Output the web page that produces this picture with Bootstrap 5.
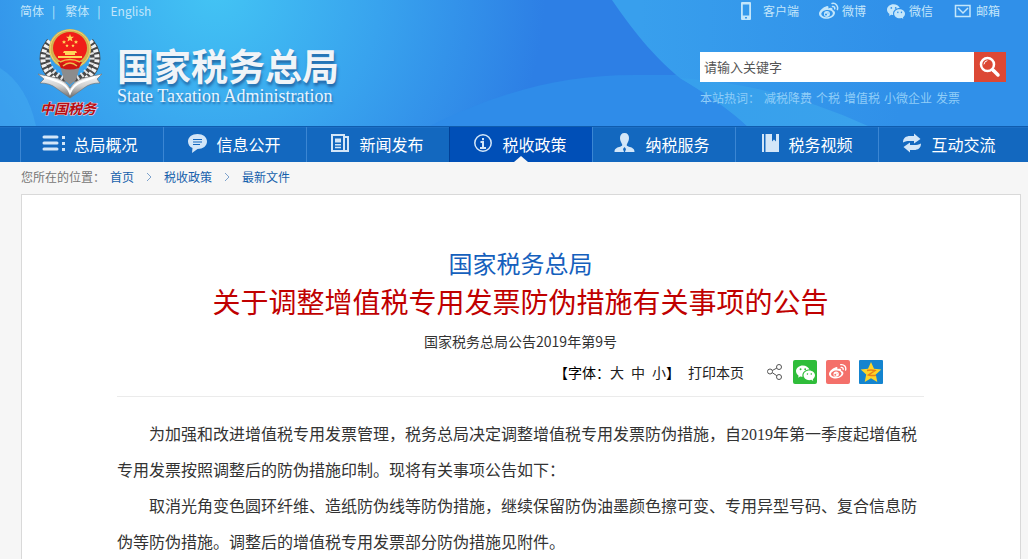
<!DOCTYPE html>
<html lang="zh-CN">
<head>
<meta charset="utf-8">
<meta name="viewport" content="width=device-width, initial-scale=1">
<title>国家税务总局</title>
<link href="https://cdn.jsdelivr.net/npm/bootstrap@5.3.0/dist/css/bootstrap.min.css" rel="stylesheet">
<style>
  body { background: #f6f6f6; color: #333; font: 12px/20px "Noto Sans CJK SC", sans-serif; }
  a { text-decoration: none; }
  .page-wrap { padding-left: 20px; padding-right: 7px; }
  .site-header { background: #2f8ce9; }
  .header-art { z-index: 0; }
  .site-header .page-wrap { z-index: 1; }
  .topbar { height: 22px; }
  .topbar, .topbar a { color: #c3e6fb; }
  .lang-links span { margin: 0 10px 0 8px; }
  .service-links { gap: 20px; padding-right: 21px; }
  .service-links a { display: flex; align-items: center; gap: 3px; }
  .service-links svg { width: 20px; height: 18px; }
  .service-links .app-link { gap: 7px; }
  .masthead { height: 104px; padding: 6px 15px 0 16px; }
  .emblem { width: 68px; height: 91px; }
  .brand-words { margin-left: 13px; padding-top: 16px; }
  .brand-cn { font-size: 37px; line-height: 42px; font-weight: 700; color: #f0f4f8; text-shadow: 1px 3px 3px rgba(20, 60, 120, .6); }
  .brand-en { font: 18px/20px "Liberation Serif", serif; color: #e8f4fd; text-shadow: 1px 2px 2px rgba(20, 60, 120, .5); }
  .search-area { width: 306px; padding-top: 24px; }
  .search-area .form-control { height: 30px; padding: 0 4px 2px; font-size: 13px; line-height: 28px; border: 0; color: #555; }
  .search-area .form-control::placeholder { color: #555; opacity: 1; line-height: 28px; }
  .search-btn { width: 32px; height: 30px; padding: 0; background: #dc4835; }
  .hot-words { margin-top: 6px; gap: 4px; color: #8fcdf8; }
  .hot-words a { color: #8fcdf8; }
  .main-menu { background: #1368bf; border-top: 1px solid #0f5cae; box-shadow: inset 0 1px #1c6fc5; }
  .main-menu li { flex: 1 1 0; border-left: 1px solid #3b86d3; }
  .main-menu a { height: 35px; gap: 7px; padding-right: 4px; padding-bottom: 1px; font-size: 16px; color: #fff; }
  .main-menu svg { width: 24px; height: 22px; color: #d3e6f8; }
  .main-menu .current { background: #004fb7; border-left-color: #004098; }
  .current a::after { content: ""; position: absolute; bottom: 0; left: 50%; margin-left: -7px; border: 7px solid transparent; border-top: 0; border-bottom: 6px solid #f6f6f6; }
  .crumbs { height: 32px; padding: 0 0 2px 1px; color: #777; }
  .crumbs span { margin-right: 5px; }
  .crumbs a { color: #1560ac; }
  .crumbs svg { width: 6px; height: 10px; margin: 0 12px; }
  .article-box { background: #fff; border: 1px solid #d9d9d9; border-bottom: 0; margin-left: 1px; padding: 49px 96px 0 95px; }
  .article-org { font-size: 24px; line-height: 38px; color: #1560bd; }
  .article-title { font-size: 28px; line-height: 38px; color: #c00000; }
  .article-no { font-size: 14px; line-height: 42px; }
  .tools { font-size: 14px; height: 20px; margin-right: 41px; color: #000; }
  .tools button { font-size: 14px; line-height: 20px; color: #222; }
  .size-set button { margin-right: 7px; }
  .size-set button:last-of-type { margin-right: 0; }
  .share-set { gap: 9px; margin-left: 22px; }
  .share-set svg { display: block; width: 24px; height: 24px; }
  .share-set .share-any svg { width: 18px; height: 18px; }
  .article-body { margin-top: 14px; padding-top: 20px; border-top: 1px solid #ebebeb; font: 16px/36px "Liberation Serif", "Noto Sans CJK SC", serif; color: #333; }
  .article-body p { text-indent: 2em; }
</style>
</head>
<body>

<svg class="d-none">
  <symbol id="wechat" viewBox="0 0 16 16"><g fill="currentColor"><path d="M11.176 14.429c-2.665 0-4.826-1.8-4.826-4.018 0-2.22 2.159-4.02 4.824-4.02S16 8.191 16 10.411c0 1.21-.65 2.301-1.666 3.036a.32.32 0 0 0-.12.366l.218.81a.6.6 0 0 1 .029.117.166.166 0 0 1-.162.162.2.2 0 0 1-.092-.03l-1.057-.61a.5.5 0 0 0-.256-.074.5.5 0 0 0-.142.021 5.7 5.7 0 0 1-1.576.22M9.064 9.542a.647.647 0 1 0 .557-1 .645.645 0 0 0-.646.647.6.6 0 0 0 .09.353Zm3.232.001a.646.646 0 1 0 .546-1 .645.645 0 0 0-.644.644.63.63 0 0 0 .098.356"/><path d="M0 6.826c0 1.455.781 2.765 2.001 3.656a.385.385 0 0 1 .143.439l-.161.6-.1.373a.5.5 0 0 0-.032.14.19.19 0 0 0 .193.193q.06 0 .111-.029l1.268-.733a.6.6 0 0 1 .308-.088q.088 0 .171.025a6.8 6.8 0 0 0 1.625.26 4.5 4.5 0 0 1-.177-1.251c0-2.936 2.785-5.02 5.824-5.02l.15.002C10.587 3.429 8.392 2 5.796 2 2.596 2 0 4.16 0 6.826m4.632-1.555a.77.77 0 1 1-1.54 0 .77.77 0 0 1 1.54 0m3.875 0a.77.77 0 1 1-1.54 0 .77.77 0 0 1 1.54 0"/></g></symbol>
  <symbol id="weibo" viewBox="0 0 20 18">
    <path fill="currentColor" fill-rule="evenodd" d="M7.5 4.2c1.6-.5 2.4.4 1.8 2.2 2.6-1 4.7-.7 4.2 1.7 1.700.6 2.600 1.500 2.500 2.800-.2 3-4 5.800-8.300 5.800C3.400 16.700 0 14.600 0 11.700 0 8.700 4.300 5 7.500 4.200ZM8.300 7.900c-3.400.1-6.100 2-6 4.200.1 2 2.800 3.300 6 3.100 3.200-.2 5.700-2.100 5.500-4.200-.2-2-2.600-3.200-5.500-3.100Z"/>
    <path fill="currentColor" fill-rule="evenodd" d="M7.900 8.900a3 3 0 1 0 .1 6 3 3 0 0 0-.1-6ZM7 11.400a1.100 1.100 0 1 1 0 2.200 1.100 1.100 0 0 1 0-2.200Zm2-.9a.5.500 0 1 1 0 1 .5.500 0 0 1 0-1Z"/>
    <path fill="none" stroke="currentColor" stroke-width="1.500" stroke-linecap="round" d="M13 1.400c3.800-.7 6.500 2.700 5.400 6.100M13.500 4.500c1.500-.3 2.600 1 2.200 2.300"/>
  </symbol>
</svg>

<header class="site-header position-relative">
  <svg class="header-art position-absolute top-0 start-0 w-100 h-100" viewBox="0 0 1028 126" preserveAspectRatio="none" aria-hidden="true">
    <defs>
      <radialGradient id="glow" gradientUnits="userSpaceOnUse" cx="215" cy="-10" r="330">
        <stop offset="0" stop-color="#43c4f4"/><stop offset=".5" stop-color="#38a3ee"/><stop offset="1" stop-color="#2d7fe5"/>
      </radialGradient>
      <linearGradient id="sweep" gradientUnits="userSpaceOnUse" x1="640" y1="0" x2="900" y2="0">
        <stop offset="0" stop-color="#389fed"/><stop offset="1" stop-color="#3090e9"/>
      </linearGradient>
      <linearGradient id="cross" gradientUnits="userSpaceOnUse" x1="690" y1="0" x2="860" y2="0">
        <stop offset="0" stop-color="#37a0ec"/><stop offset="1" stop-color="#3aa2ec"/>
      </linearGradient>
    </defs>
    <rect width="1028" height="126" fill="url(#glow)"/>
    <path d="M0 68Q27 85 36 126H0Z" fill="#49b4f3" opacity=".4"/>
    <path d="M430 126C500 92 560 75 635 75H700L760 126Z" fill="#2f8ce9"/>
    <path d="M612 0C637 37 660 62 680 78Q725 105 747 126H1028V0Z" fill="url(#sweep)"/>
    <path d="M680 78Q780 85 868 126H747Q725 105 680 78Z" fill="url(#cross)"/>
  </svg>

  <div class="container-fluid page-wrap position-relative">
    <div class="topbar d-flex justify-content-between align-items-center">
      <div class="lang-links"><a href="#">简体</a><span>|</span><a href="#">繁体</a><span>|</span><a href="#">English</a></div>
      <div class="service-links d-flex">
        <a class="app-link" href="#"><svg viewBox="0 0 20 18"><path fill="currentColor" fill-rule="evenodd" d="M6 0h8a1 1 0 0 1 1 1v16a1 1 0 0 1-1 1H6a1 1 0 0 1-1-1V1a1 1 0 0 1 1-1Zm.8 2.500v11h6.400v-11ZM9 15v1.500h2V15Z"/></svg>客户端</a>
        <a href="#"><svg><use href="#weibo"/></svg>微博</a>
        <a href="#"><svg><use href="#wechat"/></svg>微信</a>
        <a href="#"><svg viewBox="0 0 20 18"><path fill="none" stroke="currentColor" stroke-width="1.500" d="M2.500 3.500h14.500v11H2.500ZM5 6l5 5 5-5"/></svg>邮箱</a>
      </div>
    </div>

    <div class="masthead d-flex align-items-start">
      <svg class="emblem flex-shrink-0" viewBox="0 0 68 91" role="img" aria-label="中国税务">
        <defs>
          <linearGradient id="silver" x1="0" y1="0" x2="0" y2="1"><stop offset="0" stop-color="#fff"/><stop offset=".5" stop-color="#d0d0d0"/><stop offset="1" stop-color="#666"/></linearGradient>
        </defs>
        <g fill="none">
          <path d="M15 14C3 29 8 46 29 55M53 14C65 29 60 46 39 55" stroke="#484848" stroke-width="10"/>
          <path d="M14 13C1 29 6 47 29 57M54 13C67 29 62 47 39 57" stroke="#f2f2f2" stroke-width="5" stroke-dasharray="3 2"/>
          <path d="M18 16C7 30 11 42 30 52M50 16C61 30 57 42 38 52" stroke="#e4e4e4" stroke-width="5" stroke-dasharray="2 3"/>
        </g>
        <path d="M24 38h20l-4 14-6 5-6-5Z" fill="#8c8c8c"/>
        <path d="M2 46 20 50Q30 53 34 60 38 53 48 50L66 46 61 51 64 55Q54 55 48 60L34 70 20 60Q14 55 4 55L8 51Z" fill="url(#silver)" stroke="#777" stroke-width=".7"/>
        <path d="M9 49 23 54Q31 57 34 65 37 57 45 54L59 49" fill="none" stroke="#fff" stroke-width="2"/>
        <ellipse cx="34" cy="21" rx="21" ry="20" fill="#d3b250"/>
        <ellipse cx="34" cy="21" rx="20" ry="19" fill="none" stroke="#eed77b"/>
        <path d="M22 34h24l-3 6q-9 3-18 0Z" fill="#cc1712"/>
        <ellipse cx="34" cy="20" rx="17" ry="16" fill="#f01d18"/>
        <g fill="#ffd65a">
          <path d="m34 6 1 2.700 3 .1-2.300 1.800.8 2.900L34 11.900l-2.500 1.600.8-2.900L30 8.800l3-.1Z"/>
          <path d="m28 12 .6 1.300 1.400.1-1 1 .3 1.400-1.300-.7-1.300.7.300-1.400-1-1 1.400-.1ZM40 12l.6 1.300 1.400.1-1 1 .3 1.400-1.300-.7-1.300.7.300-1.400-1-1 1.400-.1ZM31 16l.5 1.100 1.200.1-.9.800.3 1.200-1.100-.6-1.100.6.300-1.200-.9-.8 1.200-.1ZM37 16l.5 1.100 1.200.1-.9.800.3 1.200-1.100-.6-1.100.6.300-1.200-.9-.8 1.200-.1Z"/>
          <path d="M28 23h12l1 2H27ZM29 25h10v2H29ZM22 28h24v2H22Z"/>
        </g>
        <path d="M24 34Q34 29 44 34M27 38q7-6 14 0" fill="none" stroke="#e9c04d" stroke-width="1.500"/>
        <text x="4" y="86" font-family="Noto Sans CJK SC, sans-serif" font-size="14" font-weight="700" font-style="italic" fill="#b80d14" stroke="#e8d8df" stroke-width="1" paint-order="stroke">中国税务</text>
      </svg>
      <div class="brand-words">
        <div class="brand-cn text-nowrap">国家税务总局</div>
        <div class="brand-en text-nowrap">State Taxation Administration</div>
      </div>
      <div class="search-area ms-auto">
        <form class="d-flex" role="search">
          <label class="visually-hidden" for="keyword">关键字</label>
          <input id="keyword" class="form-control rounded-0" type="text" placeholder="请输入关键字">
          <button class="search-btn btn rounded-0 border-0 flex-shrink-0 d-flex align-items-center justify-content-center" type="button" aria-label="搜索">
            <svg width="22" height="22" viewBox="0 0 22 22" fill="none" stroke="#fff" stroke-linecap="round"><circle cx="8.500" cy="8.500" r="6.500" stroke-width="2.500"/><path d="m14 14 5 5" stroke-width="3.500"/><path d="M5 8q.5-3 3-3.300" stroke-width="1"/></svg>
          </button>
        </form>
        <div class="hot-words d-flex text-nowrap"><span>本站热词：</span><a href="#">减税降费</a><a href="#">个税</a><a href="#">增值税</a><a href="#">小微企业</a><a href="#">发票</a></div>
      </div>
    </div>
  </div>
</header>

<nav class="main-menu" aria-label="主导航">
  <div class="container-fluid page-wrap">
    <ul class="d-flex list-unstyled m-0">
      <li><a class="d-flex align-items-center justify-content-center text-nowrap" href="#"><svg viewBox="0 0 24 22" stroke="currentColor" stroke-width="3" stroke-linecap="round"><path d="M2 4h13M2 10h13M2 16h13"/><path d="M21.500 3v3m0 3v3m0 3v3" stroke-linecap="butt"/></svg>总局概况</a></li>
      <li><a class="d-flex align-items-center justify-content-center text-nowrap" href="#"><svg viewBox="0 0 24 22"><path d="M12.500 1C7 1 3 4 3 8.500c0 3 1.700 5.300 4.500 6.500L7 20l5.500-4c5.500 0 9.500-3 9.500-7.500S18 1 12.500 1Z" fill="currentColor"/><path d="M8 6.500h9M8 9h9M8 11.500h7" stroke="#1368bf" stroke-width="1.200"/></svg>信息公开</a></li>
      <li><a class="d-flex align-items-center justify-content-center text-nowrap" href="#"><svg viewBox="0 0 24 22" fill="none" stroke="currentColor" stroke-width="2"><path d="M4 2h12v16H4ZM16 4h4v14h-5"/><path d="M7 14.500h6M7 11.700h6" stroke-width="1.500"/><path d="M7 7.500h6" stroke-width="4"/></svg>新闻发布</a></li>
      <li class="current"><a class="d-flex align-items-center justify-content-center text-nowrap position-relative" href="#" aria-current="page"><svg viewBox="0 0 24 22" fill="none" stroke="currentColor"><circle cx="12" cy="10" r="8.200" stroke-width="1.500"/><path d="M12 5v2.200M9.500 9H12v5.500M9 15h6" stroke-width="2"/></svg>税收政策</a></li>
      <li><a class="d-flex align-items-center justify-content-center text-nowrap" href="#"><svg viewBox="0 0 24 22" fill="currentColor"><path d="M10.500 0c3 0 4.500 2 4.500 5 0 2.700-1 4-2.200 6.500-.3 1 .3 1.500 1.500 2 4 1.200 6.200 2 6.200 5.500H.5c0-3.500 2.200-4.300 6.200-5.500 1.200-.5 1.800-1 1.500-2C7 9 6 7.700 6 5c0-3 1.500-5 4.500-5Z"/><path d="m10.500 14 1.500 2-1 3h-1l-1-3Z" fill="#1368bf"/></svg>纳税服务</a></li>
      <li><a class="d-flex align-items-center justify-content-center text-nowrap" href="#"><svg viewBox="0 0 24 22" fill="currentColor"><path d="M5 1h2v18H5ZM8.500 1H15v7.500l2-2 2 2V1h3v18H8.500Z"/></svg>税务视频</a></li>
      <li><a class="d-flex align-items-center justify-content-center text-nowrap" href="#"><svg viewBox="0 0 24 22" fill="currentColor"><path d="M3 9.500C3 5 6 3 10 3h4V.500L20.500 6 14 10.500V8h-4c-3 0-4.500.2-7 1.500ZM21 10.500c0 4.500-3 6.500-7 6.500h-4v2.500L3.500 14 10 9.500V12h4c3 0 4.500-.2 7-1.500Z"/></svg>互动交流</a></li>
    </ul>
  </div>
</nav>

<div class="container-fluid page-wrap">
  <nav class="crumbs d-flex align-items-center" aria-label="当前位置">
    <span>您所在的位置：</span>
    <a href="#">首页</a>
    <svg viewBox="0 0 6 10" fill="none" stroke="#7da2cc"><path d="m1 1 4 4-4 4"/></svg>
    <a href="#">税收政策</a>
    <svg viewBox="0 0 6 10" fill="none" stroke="#7da2cc"><path d="m1 1 4 4-4 4"/></svg>
    <a href="#">最新文件</a>
  </nav>

  <main class="article-box">
    <h1 class="text-center m-0 fw-normal"><span class="article-org d-block">国家税务总局</span><span class="article-title d-block">关于调整增值税专用发票防伪措施有关事项的公告</span></h1>
    <div class="article-no text-center">国家税务总局公告2019年第9号</div>
    <div class="tools d-flex justify-content-end align-items-center">
      <div class="size-set text-nowrap d-flex">【字体：<button class="btn p-0 border-0" type="button">大</button><button class="btn p-0 border-0" type="button">中</button><button class="btn p-0 border-0" type="button">小</button>】</div>
      <button class="btn p-0 border-0 ms-2 text-nowrap" type="button">打印本页</button>
      <div class="share-set d-flex align-items-center">
        <a class="share-any" href="#" aria-label="分享"><svg viewBox="0 0 18 18" fill="none" stroke="#555"><circle cx="4" cy="8.500" r="2.500"/><circle cx="13" cy="4" r="2.500"/><circle cx="13" cy="14" r="2.500"/><path d="m6.300 7.500 4.500-2.400M6.300 9.700l4.500 3"/></svg></a>
        <a href="#" aria-label="微信"><svg viewBox="0 0 24 24"><rect width="24" height="24" rx="2" fill="#2fbd3a"/><use href="#wechat" x="3" y="3" width="19" height="19" color="#fff"/></svg></a>
        <a href="#" aria-label="微博"><svg viewBox="0 0 24 24"><rect width="24" height="24" rx="2" fill="#f4706a"/><use href="#weibo" x="3" y="3" width="18" height="17" color="#fff"/></svg></a>
        <a href="#" aria-label="QQ空间"><svg viewBox="0 0 24 24"><rect width="24" height="24" rx="1" fill="#1484cf"/><path d="m12 2 3 6.800 7.300.8-5.500 5 1.500 7.400-6.300-3.800L5.700 22l1.500-7.400-5.500-5L9 8.800Z" fill="#fcd528"/><path d="M8 10.500q4-1 8 0L9.500 15q4 1 7.500.3" fill="none" stroke="#e8801a" stroke-width="1.500"/></svg></a>
      </div>
    </div>
    <div class="article-body">
      <p class="mb-0">为加强和改进增值税专用发票管理，税务总局决定调整增值税专用发票防伪措施，自2019年第一季度起增值税专用发票按照调整后的防伪措施印制。现将有关事项公告如下：</p>
      <p class="mb-0">取消光角变色圆环纤维、造纸防伪线等防伪措施，继续保留防伪油墨颜色擦可变、专用异型号码、复合信息防伪等防伪措施。调整后的增值税专用发票部分防伪措施见附件。</p>
    </div>
  </main>
</div>

<script src="https://cdn.jsdelivr.net/npm/bootstrap@5.3.0/dist/js/bootstrap.bundle.min.js"></script>
</body>
</html>
